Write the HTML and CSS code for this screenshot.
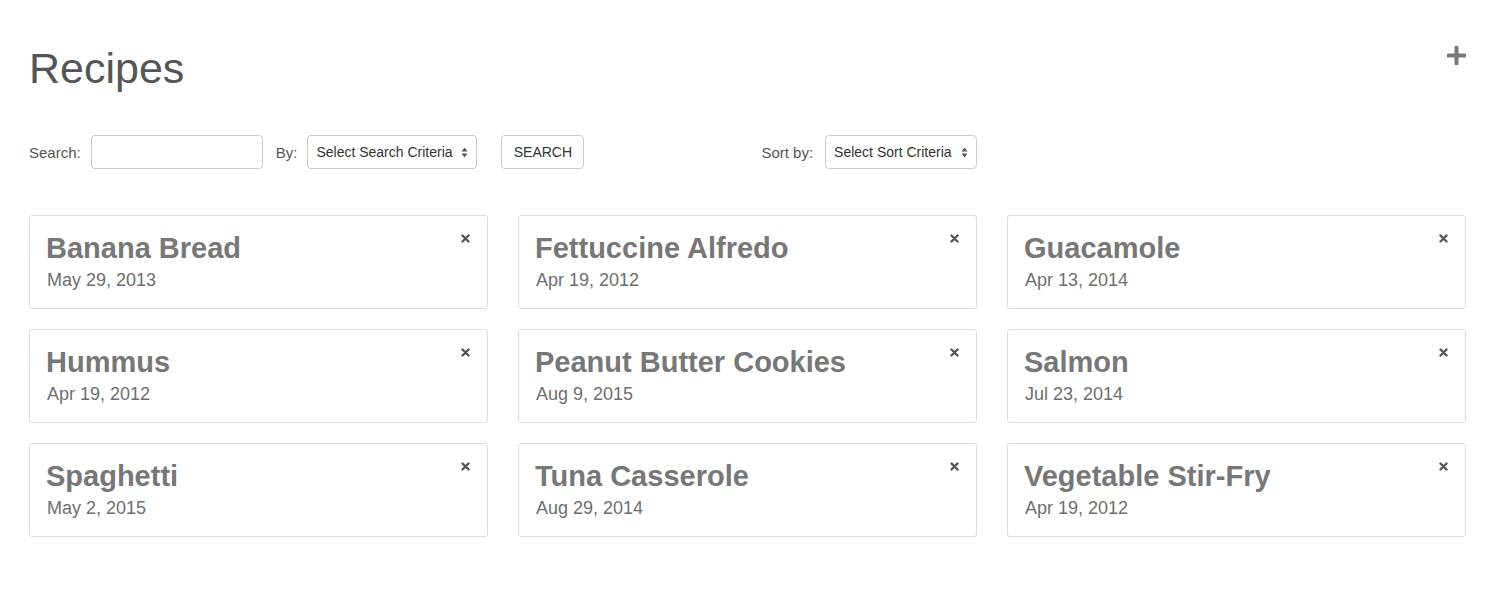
FILE: index.html
```html
<!DOCTYPE html>
<html>
<head>
<meta charset="utf-8">
<link rel="stylesheet" href="styles.css">
</head>
<body>
<div class="page">
  <header class="header">
    <h1 class="title">Recipes</h1>
    <svg class="add" width="19" height="19" viewBox="0 0 19 19"><path d="M9.5 1.5v16M1.5 9.5h16" stroke="#777" stroke-width="4" stroke-linecap="round"/></svg>
  </header>
  <form class="controls">
    <label class="lbl">Search:</label>
    <input class="input" type="text">
    <label class="lbl by">By:</label>
    <div class="select-wrap w170">
      <span class="select">Select Search Criteria</span>
      <svg class="arrows" width="7" height="11" viewBox="0 0 7 11"><path d="M3.5 0.5L6.5 4.5H0.5Z M3.5 10.5L6.5 6.5H0.5Z" fill="#555"/></svg>
    </div>
    <button class="btn" type="button">SEARCH</button>
    <label class="lbl sort">Sort by:</label>
    <div class="select-wrap w152 sortsel">
      <span class="select">Select Sort Criteria</span>
      <svg class="arrows" width="7" height="11" viewBox="0 0 7 11"><path d="M3.5 0.5L6.5 4.5H0.5Z M3.5 10.5L6.5 6.5H0.5Z" fill="#555"/></svg>
    </div>
  </form>
  <div class="grid">
    <div class="card"><div class="name">Banana Bread</div><div class="date">May 29, 2013</div><svg class="close" width="9" height="9" viewBox="0 0 9 9"><path d="M1.5 1.5l6 6M7.5 1.5l-6 6" stroke="#555" stroke-width="2.4" stroke-linecap="round"/></svg></div>
    <div class="card"><div class="name">Fettuccine Alfredo</div><div class="date">Apr 19, 2012</div><svg class="close" width="9" height="9" viewBox="0 0 9 9"><path d="M1.5 1.5l6 6M7.5 1.5l-6 6" stroke="#555" stroke-width="2.4" stroke-linecap="round"/></svg></div>
    <div class="card"><div class="name">Guacamole</div><div class="date">Apr 13, 2014</div><svg class="close" width="9" height="9" viewBox="0 0 9 9"><path d="M1.5 1.5l6 6M7.5 1.5l-6 6" stroke="#555" stroke-width="2.4" stroke-linecap="round"/></svg></div>
    <div class="card"><div class="name">Hummus</div><div class="date">Apr 19, 2012</div><svg class="close" width="9" height="9" viewBox="0 0 9 9"><path d="M1.5 1.5l6 6M7.5 1.5l-6 6" stroke="#555" stroke-width="2.4" stroke-linecap="round"/></svg></div>
    <div class="card"><div class="name">Peanut Butter Cookies</div><div class="date">Aug 9, 2015</div><svg class="close" width="9" height="9" viewBox="0 0 9 9"><path d="M1.5 1.5l6 6M7.5 1.5l-6 6" stroke="#555" stroke-width="2.4" stroke-linecap="round"/></svg></div>
    <div class="card"><div class="name">Salmon</div><div class="date">Jul 23, 2014</div><svg class="close" width="9" height="9" viewBox="0 0 9 9"><path d="M1.5 1.5l6 6M7.5 1.5l-6 6" stroke="#555" stroke-width="2.4" stroke-linecap="round"/></svg></div>
    <div class="card"><div class="name">Spaghetti</div><div class="date">May 2, 2015</div><svg class="close" width="9" height="9" viewBox="0 0 9 9"><path d="M1.5 1.5l6 6M7.5 1.5l-6 6" stroke="#555" stroke-width="2.4" stroke-linecap="round"/></svg></div>
    <div class="card"><div class="name">Tuna Casserole</div><div class="date">Aug 29, 2014</div><svg class="close" width="9" height="9" viewBox="0 0 9 9"><path d="M1.5 1.5l6 6M7.5 1.5l-6 6" stroke="#555" stroke-width="2.4" stroke-linecap="round"/></svg></div>
    <div class="card"><div class="name">Vegetable Stir-Fry</div><div class="date">Apr 19, 2012</div><svg class="close" width="9" height="9" viewBox="0 0 9 9"><path d="M1.5 1.5l6 6M7.5 1.5l-6 6" stroke="#555" stroke-width="2.4" stroke-linecap="round"/></svg></div>
  </div>
</div>
</body>
</html>
```

FILE: styles.css
```css
* { box-sizing: border-box; }
html, body { margin: 0; padding: 0; background: #fff; }
body { font-family: "Liberation Sans", Arial, sans-serif; color: #555; }
.page { padding: 45px 28px 0 29px; }
.header { display: flex; justify-content: space-between; align-items: flex-start; }
.title { margin: 0; font-size: 43px; line-height: 47px; font-weight: normal; color: #555; }
.add { margin-top: 1px; }
.controls { display: flex; align-items: center; margin-top: 43px; height: 34px; }
.lbl { font-size: 15px; color: #555; }
.input { width: 172px; height: 34px; margin-left: 10px; border: 1px solid #ccc; border-radius: 4px; padding: 0 8px; font: inherit; }
.by { margin-left: 13px; }
.select-wrap { position: relative; height: 34px; margin-left: 10px; border: 1px solid #ccc; border-radius: 4px; display: flex; align-items: center; padding-left: 8px; }
.sortsel { margin-left: 12px; }
.w170 { width: 170px; }
.w152 { width: 152px; }
.select { font-size: 14px; color: #333; white-space: nowrap; }
.arrows { position: absolute; right: 8px; top: 11px; }
.btn { margin-left: 24px; width: 83px; height: 34px; border: 1px solid #ccc; border-radius: 4px; background: #fff; font-family: "Liberation Sans", Arial, sans-serif; font-size: 14px; color: #333; padding: 0; }
.sort { margin-left: 177px; }
.grid { display: grid; grid-template-columns: 459px 459px 459px; column-gap: 30px; row-gap: 20px; margin-top: 46px; }
.card { position: relative; height: 94px; border: 1px solid #ddd; border-radius: 3px; padding: 16px 16px 0 16px; }
.name { font-size: 29px; line-height: 32px; font-weight: bold; color: #777; }
.date { margin-top: 6px; margin-left: 1px; font-size: 18px; line-height: 20px; color: #6e6e6e; }
.close { position: absolute; top: 18px; right: 17px; }
```
